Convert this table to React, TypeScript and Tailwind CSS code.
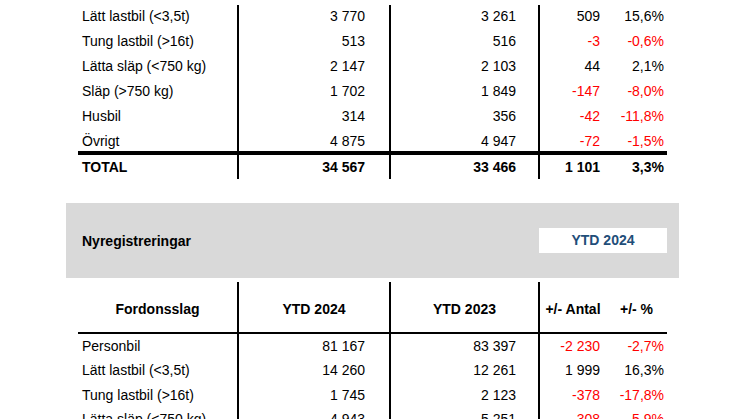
const TOP_ROWS = [
  { label: "Lätt lastbil (<3,5t)", a: "3 770", b: "3 261", d: "509", p: "15,6%", neg: false },
  { label: "Tung lastbil (>16t)", a: "513", b: "516", d: "-3", p: "-0,6%", neg: true },
  { label: "Lätta släp (<750 kg)", a: "2 147", b: "2 103", d: "44", p: "2,1%", neg: false },
  { label: "Släp (>750 kg)", a: "1 702", b: "1 849", d: "-147", p: "-8,0%", neg: true },
  { label: "Husbil", a: "314", b: "356", d: "-42", p: "-11,8%", neg: true },
  { label: "Övrigt", a: "4 875", b: "4 947", d: "-72", p: "-1,5%", neg: true },
];

const YTD_ROWS = [
  { label: "Personbil", a: "81 167", b: "83 397", d: "-2 230", p: "-2,7%", neg: true },
  { label: "Lätt lastbil (<3,5t)", a: "14 260", b: "12 261", d: "1 999", p: "16,3%", neg: false },
  { label: "Tung lastbil (>16t)", a: "1 745", b: "2 123", d: "-378", p: "-17,8%", neg: true },
  { label: "Lätta släp (<750 kg)", a: "4 943", b: "5 251", d: "-308", p: "-5,9%", neg: true },
];

const GRID = "grid grid-cols-[159px_152px_149px_68px_61px]";

type Row = (typeof TOP_ROWS)[number];

function DataRow({ row, height, shift = "" }: { row: Row; height: string; shift?: string }) {
  const tone = row.neg ? "text-[#ff0000]" : "text-black";
  const cell = `flex items-center ${shift}`;
  return (
    <div className={`${GRID} ${height}`}>
      <div className={`${cell} pl-1`}>{row.label}</div>
      <div className={`${cell} justify-end border-l-2 border-black pr-6`}>{row.a}</div>
      <div className={`${cell} justify-end border-l-2 border-black pr-[22px]`}>{row.b}</div>
      <div className={`${cell} justify-end border-l-2 border-black pr-1.5 ${tone}`}>{row.d}</div>
      <div className={`${cell} justify-end pr-[3px] ${tone}`}>{row.p}</div>
    </div>
  );
}

export default function App() {
  return (
    <div className="w-[746px] h-[419px] overflow-hidden bg-white text-black text-[14px] font-['Liberation_Sans',Arial,sans-serif]">
      {/* ── Total table (continues from above) ── */}
      <div className="ml-[78px] w-[589px] pt-[4.5px]">
        {TOP_ROWS.map((r, i) => (
          <DataRow
            key={r.label}
            row={r}
            height={i === TOP_ROWS.length - 1 ? "h-[26.5px] border-b-4 border-black" : "h-[24.8px]"}
            shift={i === TOP_ROWS.length - 1 ? "pt-[3px]" : i >= 3 ? "pt-[1px]" : ""}
          />
        ))}
        <div className={`${GRID} h-[24px] font-bold`}>
          <div className="pl-1 pt-[2px]">TOTAL</div>
          <div className="text-right border-l-2 border-black pr-6 pt-[2px]">34 567</div>
          <div className="text-right border-l-2 border-black pr-[22px] pt-[2px]">33 466</div>
          <div className="text-right border-l-2 border-black pr-1.5 pt-[2px]">1 101</div>
          <div className="text-right pr-[3px] pt-[2px]">3,3%</div>
        </div>
      </div>

      {/* ── Section band ── */}
      <div className="ml-[66px] mt-[24px] w-[613px] h-[75px] bg-[#d9d9d9] flex items-center justify-between pl-4 pr-3">
        <span className="font-bold pt-[3px]">Nyregistreringar</span>
        <span className="w-[128px] h-[25px] bg-white flex items-center justify-center font-bold text-[#1f4e79]">
          YTD 2024
        </span>
      </div>

      {/* ── YTD table ── */}
      <div className="ml-[78px] w-[589px] mt-[4px]">
        <div className={`${GRID} h-[52px] border-b-2 border-black font-bold`}>
          <div className="flex items-center justify-center pt-[5px]">Fordonsslag</div>
          <div className="flex items-center justify-center border-l-2 border-black pt-[5px]">YTD 2024</div>
          <div className="flex items-center justify-center border-l-2 border-black pt-[5px]">YTD 2023</div>
          <div className="flex items-center justify-center border-l-2 border-black pt-[5px]">+/- Antal</div>
          <div className="flex items-center justify-center pt-[5px]">+/- %</div>
        </div>
        {YTD_ROWS.map((r) => (
          <DataRow key={r.label} row={r} height="h-[24.5px]" />
        ))}
      </div>
    </div>
  );
}
